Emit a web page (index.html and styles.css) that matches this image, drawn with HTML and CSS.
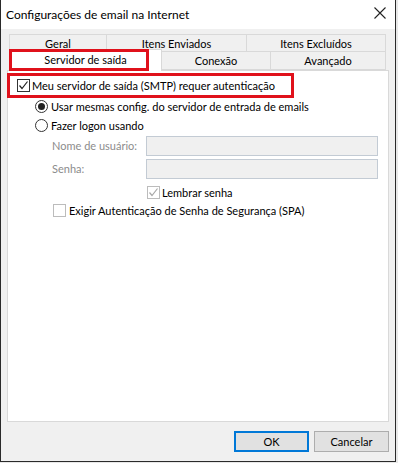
FILE: index.html
```html
<html>
	<head>
		<link rel="stylesheet" href="styles.css">
	</head>
	<body>
		<div class="window">
			<div class="titlebar">
				<span class="title">Configurações de email na Internet</span>
				<svg class="close" width="12" height="12" viewBox="0 0 12 12"><path d="M0.5 0.5 L11.5 11.5 M11.5 0.5 L0.5 11.5" stroke="#222" stroke-width="1.1" fill="none"/></svg>
			</div>

			<div class="main">
				<div class="tabs">
					<div class="tabrow back">
						<div class="tab t-geral">Geral</div>
						<div class="tab t-env">Itens Enviados</div>
						<div class="tab t-exc">Itens Excluídos</div>
					</div>
					<div class="tabrow front">
						<div class="tab t-serv active">Servidor de saída<span class="mark"></span></div>
						<div class="tab t-con">Conexão</div>
						<div class="tab t-ava">Avançado</div>
					</div>
				</div>

				<div class="panel">
					<div class="row hl">
						<span class="check on"><svg width="11" height="11" viewBox="0 0 11 11"><path d="M1.5 5.5 L4 8.5 L9.5 1.5" stroke="#222" stroke-width="1.2" fill="none"/></svg></span>
						<span>Meu servidor de saída (SMTP) requer autenticação</span>
					</div>
					<div class="row radio-row r1">
						<span class="radio on"></span>
						<span>Usar mesmas config. do servidor de entrada de emails</span>
					</div>
					<div class="row radio-row r2">
						<span class="radio"></span>
						<span>Fazer logon usando</span>
					</div>

					<div class="fields">
						<label>Nome de usuário:</label>
						<div class="field"></div>
						<label>Senha:</label>
						<div class="field"></div>
					</div>

					<div class="row remember">
						<span class="check dis"><svg width="11" height="11" viewBox="0 0 11 11"><path d="M1.5 5.5 L4 8.5 L9.5 1.5" stroke="#a8a8a8" stroke-width="1.2" fill="none"/></svg></span>
						<span>Lembrar senha</span>
					</div>
					<div class="row spa">
						<span class="check dis"></span>
						<span>Exigir Autenticação de Senha de Segurança (SPA)</span>
					</div>
				</div>

				<div class="buttons">
					<button class="btn default">OK</button>
					<button class="btn">Cancelar</button>
				</div>
			</div>
		</div>
	</body>
</html>
```

FILE: styles.css
```css
*{
	margin:0;
	padding:0;
	box-sizing:border-box;
}
body{
	width:398px;
	height:463px;
	background:#e8e8e8;
	font-family:Lato, "Noto Sans", sans-serif;
	font-size:11px;
	color:#000;
	overflow:hidden;
	white-space:nowrap;
}
.window{
	width:396px;
	height:462px;
	background:#f0f0f0;
	border:1px solid #2a2a2a;
	border-top:none;
	display:flex;
	flex-direction:column;
}
.titlebar{
	height:29px;
	background:#fff;
	display:flex;
	align-items:center;
	justify-content:space-between;
	padding:0 9px 0 5px;
}
.title{
	font-size:12px;
}
.close{
	margin-top:-3px;
}

.main{
	padding:5px 0 0 6px;
}

/* abas */
.tabs{
	margin-left:2px;
	height:36px;
	display:flex;
	flex-direction:column;
}
.tabrow{
	display:flex;
}
.tab{
	background:#f0f0f0;
	border:1px solid #d9d9d9;
	text-align:center;
	position:relative;
}
.back{
	height:17px;
}
.back .tab{
	border-bottom:none;
	line-height:17px;
}
.back .tab + .tab, .front .tab + .tab{
	border-left:none;
}
.t-geral{ width:98px; }
.t-env{ width:140px; }
.t-exc{ width:139px; }

.front{
	height:19px;
}
.front .tab{
	line-height:18px;
}
.t-serv{ width:153px; }
.t-con{ width:109px; }
.t-ava{ width:115px; }
.tab.active{
	background:#fff;
	border-bottom:none;
	margin-top:-2px;
	height:22px;
	line-height:20px;
	z-index:2;
}
.mark{
	position:absolute;
	left:-1px;
	top:-1px;
	width:140px;
	height:22px;
	border:3px solid #e0111b;
}

/* painel */
.panel{
	width:382px;
	height:352px;
	background:#fff;
	border:1px solid #d9d9d9;
	position:relative;
	z-index:1;
}
.row{
	display:flex;
	align-items:center;
	gap:2px;
}
.hl{
	width:287px;
	height:25px;
	margin:2px 0 0 -1px;
	border:3px solid #e0111b;
	padding-left:7px;
}
.check{
	width:13px;
	height:13px;
	border:1px solid #333;
	background:#fff;
	display:flex;
	align-items:center;
	justify-content:center;
	flex-shrink:0;
}
.check.dis{
	border-color:#bcbcbc;
}
.radio{
	width:13px;
	height:13px;
	border:1px solid #333;
	border-radius:50%;
	background:#fff;
	display:flex;
	align-items:center;
	justify-content:center;
	flex-shrink:0;
}
.radio.on::after{
	content:"";
	width:7px;
	height:7px;
	border-radius:50%;
	background:#222;
}
.radio-row{
	margin-left:27px;
	height:19px;
	gap:3px;
}
.r1{
	margin-top:-1px;
}

.fields{
	display:grid;
	grid-template-columns:94px 232px;
	row-gap:3px;
	margin:1px 0 0 44px;
}
.fields label{
	color:#8c8c8c;
	line-height:20px;
}
.field{
	height:20px;
	background:#f0f0f0;
	border:1px solid #c3cbd4;
}
.remember{
	margin:5px 0 0 139px;
	height:17px;
	gap:2px;
}
.spa{
	margin:1px 0 0 45px;
	height:17px;
	gap:3px;
}

/* botões */
.buttons{
	display:flex;
	justify-content:flex-end;
	gap:5px;
	width:382px;
	margin-top:9px;
}
.btn{
	width:75px;
	height:21px;
	background:#e1e1e1;
	border:1px solid #adadad;
	font-family:Lato, "Noto Sans", sans-serif;
	font-size:11px;
	color:#000;
}
.btn.default{
	border:2px solid #0078d7;
}
```
